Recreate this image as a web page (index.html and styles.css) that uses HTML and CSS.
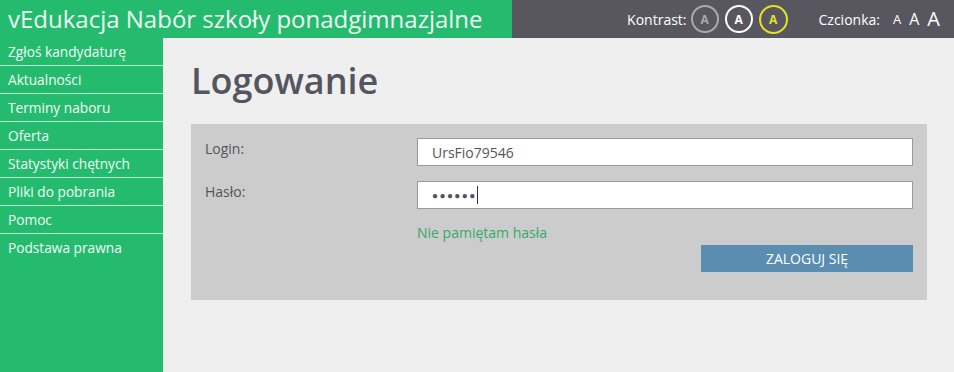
FILE: index.html
```html
<!DOCTYPE html>
<html lang="pl">
<head>
  <meta charset="UTF-8">
  <title>vEdukacja Nabór szkoły ponadgimnazjalne - Logowanie</title>
  <link rel="stylesheet" href="styles.css">
</head>
<body>
  <div class="header">
    <div class="brand">vEdukacja Nabór szkoły ponadgimnazjalne</div>
    <div class="tools">
      <span class="tools-label">Kontrast:</span>
      <span class="contrast c-gray">A</span>
      <span class="contrast c-white">A</span>
      <span class="contrast c-yellow">A</span>
      <span class="tools-label font-label">Czcionka:</span>
      <span class="font-size fs-1">A</span>
      <span class="font-size fs-2">A</span>
      <span class="font-size fs-3">A</span>
    </div>
  </div>

  <div class="main">
    <div class="sidebar">
      <a href="#">Zgłoś kandydaturę</a>
      <a href="#">Aktualności</a>
      <a href="#">Terminy naboru</a>
      <a href="#">Oferta</a>
      <a href="#">Statystyki chętnych</a>
      <a href="#">Pliki do pobrania</a>
      <a href="#">Pomoc</a>
      <a href="#">Podstawa prawna</a>
    </div>

    <div class="content">
      <h1>Logowanie</h1>
      <div class="login-box">
        <div class="row">
          <label for="login">Login:</label>
          <input type="text" id="login" value="UrsFio79546">
        </div>
        <div class="row">
          <label for="pass">Hasło:</label>
          <div class="fake-input"><span class="dots">●●●●●●</span><span class="caret"></span></div>
        </div>
        <div class="row row-link">
          <span class="spacer"></span>
          <a href="#" class="forgot">Nie pamiętam hasła</a>
        </div>
        <div class="row row-btn">
          <button>ZALOGUJ SIĘ</button>
        </div>
      </div>
    </div>
  </div>
</body>
</html>
```

FILE: styles.css
```css
* { box-sizing: border-box; }
html, body {
  margin: 0;
  height: 100%;
}
body {
  font-family: "Open Sans", "Liberation Sans", sans-serif;
  background: #efefef;
  color: #555;
  display: flex;
  flex-direction: column;
}
.header {
  display: flex;
  height: 38px;
}
.brand {
  width: 512px;
  background: #25bb6f;
  color: #eefaf3;
  font-size: 24px;
  line-height: 38px;
  padding-left: 8px;
  white-space: nowrap;
}
.tools {
  flex: 1;
  background: #58575f;
  display: flex;
  align-items: center;
  justify-content: flex-end;
  padding-right: 14px;
  color: #fff;
  font-size: 14px;
}
.tools-label {
  margin-right: 4px;
}
.font-label {
  margin-left: 31px;
  margin-right: 13px;
}
.contrast {
  width: 28px;
  height: 28px;
  border-radius: 50%;
  border: 2px solid #a9a9ad;
  color: #a9a9ad;
  font-size: 12px;
  font-weight: 700;
  display: flex;
  align-items: center;
  justify-content: center;
  margin-left: 6px;
}
.contrast.c-gray { margin-left: 0; }
.c-white { border-color: #fff; color: #fff; }
.c-yellow { border-color: #e2e226; color: #e2e226; width: 29px; height: 29px; }
.font-size {
  margin-left: 8px;
  line-height: 1;
}
.fs-1 { font-size: 13px; margin-left: 0; }
.fs-2 { font-size: 16px; }
.fs-3 { font-size: 20px; }

.main {
  flex: 1;
  display: flex;
}
.sidebar {
  width: 163px;
  background: #25bb6f;
  display: flex;
  flex-direction: column;
}
.sidebar a {
  display: block;
  height: 28px;
  line-height: 27px;
  padding-left: 8px;
  color: #f0fbf5;
  font-size: 13.7px;
  text-decoration: none;
  border-bottom: 1px solid #b9ebd0;
}
.sidebar a:last-child { border-bottom: none; }

.content {
  flex: 1;
  padding: 0 27px 0 28px;
}
.content h1 {
  margin: 16px 0 0;
  height: 70px;
  font-size: 36px;
  font-weight: 600;
  line-height: 53px;
  color: #55555f;
}
.login-box {
  background: #cccccc;
  padding: 14px 14px 28px;
}
.row {
  display: flex;
  align-items: flex-start;
  margin-bottom: 15px;
}
.row label {
  width: 212px;
  font-size: 14px;
  color: #555;
  line-height: 22px;
}
.row input,
.fake-input {
  flex: 1;
  height: 28px;
  border: 1px solid #9a9a9a;
  background: #fff;
  font-family: inherit;
  font-size: 14px;
  color: #555;
  padding: 0 14px;
  outline: none;
}
.fake-input {
  display: flex;
  align-items: center;
}
.dots {
  font-size: 10px;
  letter-spacing: 1.4px;
  color: #55555f;
}
.caret {
  width: 1px;
  height: 18px;
  background: #333;
}
.row-link {
  margin-bottom: 0;
  height: 21px;
}
.spacer { width: 212px; }
.forgot {
  color: #34a96a;
  font-size: 14px;
  text-decoration: none;
  line-height: 18px;
}
.row-btn {
  justify-content: flex-end;
  margin-bottom: 0;
}
.row-btn button {
  width: 212px;
  height: 27px;
  border: none;
  background: #5b8db1;
  color: #fff;
  font-family: inherit;
  font-size: 14px;
  cursor: pointer;
}
```
